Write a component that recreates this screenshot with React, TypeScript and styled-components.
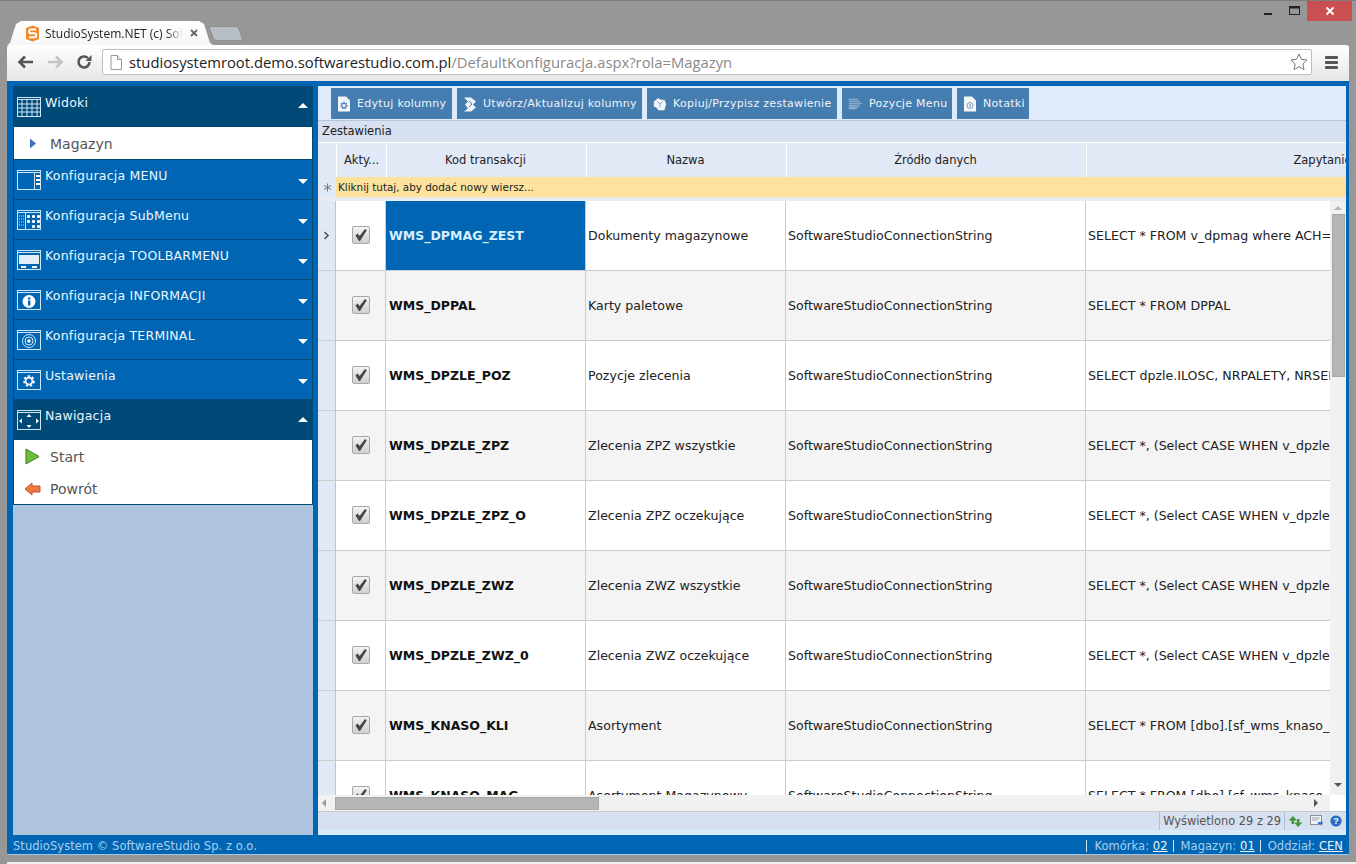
import React from 'react';
import styled, { createGlobalStyle } from 'styled-components';

const GlobalStyle = createGlobalStyle`
  html, body {
    margin: 0;
    padding: 0;
    overflow: hidden;
    background: #979797;
  }
`;

const UI_FONT = `"DejaVu Sans", Verdana, sans-serif`;
const CHROME_FONT = `"Open Sans", "Noto Sans", sans-serif`;

const Frame = styled.div`
  width: 1356px;
  height: 864px;
  display: flex;
  flex-direction: column;
  background: #979797;
  border-top: 1px solid #7c7c7c;
  box-sizing: border-box;
  overflow: hidden;
`;

const TitleBar = styled.div`
  height: 44px;
  flex: none;
  display: flex;
  align-items: flex-end;
  padding-left: 7px;
`;

const ActiveTab = styled.div`
  width: 206px;
  height: 24px;
  background: linear-gradient(#ffffff, #f6f6f6);
  clip-path: polygon(0 100%, 3px 92%, 9px 12%, 14px 0, 192px 0, 197px 12%, 203px 92%, 206px 100%);
  display: flex;
  align-items: center;
  padding: 0 14px 0 18px;
  box-sizing: border-box;
  font-family: ${CHROME_FONT};
  font-size: 12px;
  color: #222;
`;

const TabTitle = styled.span`
  width: 138px;
  margin-left: 5px;
  white-space: nowrap;
  overflow: hidden;
  -webkit-mask-image: linear-gradient(to right, #000 88%, transparent);
  mask-image: linear-gradient(to right, #000 88%, transparent);
`;

const TabClose = styled.svg`
  margin-left: 7px;
  flex: none;
`;

const NewTab = styled.div`
  width: 30px;
  height: 15px;
  margin: 0 0 4px -2px;
  background: #b8bec5;
  border: 1px solid #8a8f94;
  box-sizing: border-box;
  border-radius: 2px 3px 3px 3px;
  transform: skewX(20deg);
`;

const WindowControls = styled.div`
  margin-left: auto;
  margin-right: 4px;
  align-self: flex-start;
  display: flex;
  align-items: flex-start;
`;

const WindowButton = styled.div<{ $close?: boolean }>`
  width: ${p => (p.$close ? '45px' : '26px')};
  height: 20px;
  display: flex;
  align-items: center;
  justify-content: center;
  background: ${p => (p.$close ? '#c94f50' : 'transparent')};
`;

const Browser = styled.div`
  margin: 0 7px;
  flex: none;
  display: flex;
  flex-direction: column;
`;

const NavBar = styled.div`
  height: 36px;
  background: linear-gradient(#ffffff, #e6e6e6);
  border-radius: 3px 3px 0 0;
  display: flex;
  align-items: center;
  padding: 0 0 2px 10px;
  box-sizing: border-box;
`;

const NavIcon = styled.svg<{ $gap: number }>`
  flex: none;
  margin-right: ${p => p.$gap}px;
`;

const Omnibox = styled.div`
  width: 1210px;
  height: 26px;
  background: #fff;
  border: 1px solid #bdbdbd;
  border-radius: 2px;
  display: flex;
  align-items: center;
  padding: 0 3px 0 7px;
  box-sizing: border-box;
  font-family: ${CHROME_FONT};
  font-size: 14.8px;
  color: #222;
`;

const PageIcon = styled.svg`
  flex: none;
  margin-right: 7px;
`;

const UrlPath = styled.span`
  color: #8a8a8a;
`;

const Star = styled.svg`
  margin-left: auto;
`;

const Burger = styled.div`
  width: 13px;
  margin-left: 13px;
  display: flex;
  flex-direction: column;
  gap: 2px;

  & > i {
    display: block;
    height: 3px;
    background: #555;
    border-radius: 1px;
  }
`;

const AppShell = styled.div`
  height: 774px;
  background: #0066b3;
  display: flex;
  flex-direction: column;
  font-family: ${UI_FONT};
`;

const AppBody = styled.div`
  flex: 1;
  min-height: 0;
  display: flex;
  padding: 5px 3px 0 6px;
`;

const Sidebar = styled.aside`
  width: 300px;
  background: #aec3dd;
  flex: none;
  display: flex;
  flex-direction: column;
`;

const AccordionHead = styled.div<{ $open?: boolean; $tall?: boolean }>`
  height: ${p => (p.$tall ? '41px' : '40px')};
  background: ${p => (p.$open ? '#004a77' : '#0066b3')};
  border: 1px solid #004a77;
  border-width: ${p => (p.$open ? '0' : '0 1px 1px')};
  box-sizing: border-box;
  display: flex;
  align-items: center;
  padding: ${p => (p.$open ? '0 5px 0 4px' : '0 4px 0 3px')};
  color: #eef6fd;
  font-size: 12.5px;
  font-weight: 500;
`;

const HeadLabel = styled.span`
  margin: 0 0 9px 4px;
  letter-spacing: 0.22px;
`;

const Caret = styled.span<{ $up?: boolean }>`
  margin: ${p => (p.$up ? '0 0 2px auto' : '3px 0 0 auto')};
  width: 0;
  height: 0;
  border-left: 5px solid transparent;
  border-right: 5px solid transparent;
  ${p => (p.$up ? 'border-bottom: 5px solid #fff;' : 'border-top: 5px solid #fff;')}
`;

const AccordionBody = styled.div`
  background: #fff;
  border: 1px solid #004a77;
  border-top: 0;
  display: flex;
  flex-direction: column;
`;

const MenuItem = styled.div`
  height: 32px;
  display: flex;
  align-items: center;
  color: #555;
  font-size: 14px;
  padding-top: 1px;
  box-sizing: border-box;
`;

const MenuIconSlot = styled.span`
  width: 36px;
  flex: none;
  display: flex;
  justify-content: center;
  padding-left: 1px;
  box-sizing: border-box;
`;

const Main = styled.main`
  flex: 1;
  min-width: 0;
  margin-left: 5px;
  background: #d6e0ee;
  display: flex;
  flex-direction: column;
  overflow: hidden;
`;

const Toolbar = styled.div`
  height: 35px;
  flex: none;
  box-sizing: border-box;
  background: #dfeafa;
  border-bottom: 1px solid #b5c5d8;
  display: flex;
  gap: 5px;
  padding: 2px 0 0 13px;
`;

const ToolButton = styled.div<{ $w: number }>`
  width: ${p => p.$w}px;
  height: 31px;
  background: #457db0;
  color: #eef4fa;
  font-size: 11px;
  letter-spacing: 0.3px;
  display: flex;
  align-items: center;
  padding-left: 6px;
  box-sizing: border-box;
  white-space: nowrap;

  & > svg {
    flex: none;
    margin-right: 6px;
  }
`;

const SectionTitle = styled.div`
  height: 21px;
  flex: none;
  padding-left: 4px;
  font-size: 11.5px;
  line-height: 20px;
  color: #222;
  background: #d6e0ee;
`;

const COLUMNS = '18px 50px 200px 200px 300px 474px';

const HeaderRow = styled.div`
  height: 35px;
  flex: none;
  display: grid;
  grid-template-columns: ${COLUMNS};
  background: #e1e9f6;
  border-top: 1px solid #fff;
  box-sizing: border-box;
  color: #222;
  font-size: 11.5px;
`;

const HeaderCell = styled.div<{ $narrow?: boolean }>`
  display: flex;
  align-items: center;
  justify-content: center;
  border-left: 1px solid #fff;
  white-space: nowrap;
  overflow: hidden;
  padding: 0 ${p => (p.$narrow ? '0' : '2px')} 1px 0;
  box-sizing: border-box;
`;

const NewRow = styled.div`
  height: 20px;
  flex: none;
  display: flex;
  align-items: center;
  background: #e1e9f6;
  font-size: 10.4px;
  color: #222;
`;

const NewRowMark = styled.span`
  width: 18px;
  flex: none;
  display: flex;
  justify-content: center;
`;

const NewRowLabel = styled.span`
  flex: 1;
  height: 100%;
  background: #fde29e;
  display: flex;
  align-items: center;
  padding-left: 2px;
`;

const Spacer = styled.div`
  height: 4px;
  flex: none;
  background: #e8ebef;
`;

const GridArea = styled.div`
  flex: 1;
  min-height: 0;
  display: grid;
  grid-template-columns: 1fr 16px;
  grid-template-rows: 1fr 16px;
  background: #f1f1f1;
`;

const RowsViewport = styled.div`
  overflow: hidden;
  min-width: 0;
  min-height: 0;
  background: #fff;
`;

const DataRow = styled.div<{ $alt: boolean }>`
  height: 70px;
  display: grid;
  grid-template-columns: ${COLUMNS};
  background: ${p => (p.$alt ? '#f4f4f4' : '#fff')};
  border-bottom: 1px solid #ccc;
  box-sizing: border-box;
  font-size: 12.6px;
  color: #222;
`;

const Indicator = styled.div`
  background: #e1e9f6;
  border-right: 1px solid #b4c6dc;
  display: flex;
  align-items: center;
  justify-content: center;
  box-sizing: border-box;
`;

const CheckCell = styled.div`
  display: flex;
  align-items: center;
  justify-content: center;
  border-right: 1px solid #ccc;
  box-sizing: border-box;
  padding-bottom: 2px;
`;

const CheckBox = styled.span`
  width: 18px;
  height: 18px;
  box-sizing: border-box;
  border: 1px solid #a8a8a8;
  border-radius: 2px;
  background: linear-gradient(#f2f2f2, #cfcfcf);
  display: flex;
  align-items: center;
  justify-content: center;
`;

const Cell = styled.div<{ $code?: boolean; $selected?: boolean }>`
  display: flex;
  align-items: center;
  padding-left: 2px;
  border-right: 1px solid #ccc;
  box-sizing: border-box;
  white-space: nowrap;
  overflow: hidden;
  font-weight: ${p => (p.$code ? 700 : 400)};
  ${p => p.$code && 'font-size: 12.5px; color: #111; padding-left: 3px;'}
  ${p => p.$selected && 'background: #0066b3; color: #d8effd;'}
`;

const VScroll = styled.div`
  display: flex;
  flex-direction: column;
  align-items: center;
  background: #f1f1f1;
`;

const VSpace = styled.div`
  flex: 1;
`;

const VThumb = styled.div`
  width: 13px;
  height: 163px;
  background: #b5b5b5;
  border: 1px solid #a8a8a8;
  box-sizing: border-box;
  margin-top: 4px;
`;

const HScroll = styled.div`
  display: flex;
  align-items: center;
  background: #f1f1f1;
  padding-left: 4px;
`;

const HThumb = styled.div`
  width: 264px;
  height: 13px;
  margin-left: 9px;
  background: #b5b5b5;
  border: 1px solid #a8a8a8;
  box-sizing: border-box;
`;

const ArrowH = styled.span<{ $right?: boolean }>`
  width: 0;
  height: 0;
  border-top: 4px solid transparent;
  border-bottom: 4px solid transparent;
  ${p => (p.$right ? 'border-left: 4px solid #555; margin-left: auto; margin-right: 12px;' : 'border-right: 4px solid #999;')}
`;

const ArrowV = styled.span<{ $down?: boolean }>`
  width: 0;
  height: 0;
  border-left: 4px solid transparent;
  border-right: 4px solid transparent;
  ${p => (p.$down ? 'border-top: 4px solid #555; margin: 0 0 8px;' : 'border-bottom: 4px solid #b5b5b5; margin-top: 5px;')}
`;

const ScrollCorner = styled.div`
  background: #fff;
`;

const StatusBar = styled.div`
  height: 24px;
  flex: none;
  background: #d6e0ee;
  border-top: 1px solid #c3cad3;
  border-bottom: 5px solid #d9ebfb;
  box-sizing: border-box;
  display: flex;
  justify-content: flex-end;
  align-items: stretch;
  padding-right: 4px;
  font-size: 11.4px;
  color: #555;
`;

const StatusCount = styled.span`
  display: flex;
  align-items: center;
  padding: 0 3px;
  border-left: 1px solid #aebccc;
  border-right: 1px solid #aebccc;
  white-space: nowrap;
`;

const StatusIcons = styled.span`
  display: flex;
  align-items: center;
  gap: 7px;
  padding-left: 3px;
`;

const Footer = styled.footer`
  height: 20px;
  flex: none;
  display: flex;
  align-items: center;
  justify-content: space-between;
  padding: 0 6px 0 6px;
  font-size: 11.5px;
  letter-spacing: 0.05px;
  color: #a9cff0;
  border-top: 1px solid #0066b3;
  box-sizing: border-box;
  box-shadow: inset 0 -1px 0 #9ec6e8;
`;

const FooterGroup = styled.span`
  display: flex;
  gap: 5px;
`;

const FooterPart = styled.span`
  border-left: 1px solid #d5e7f6;
  padding-left: 7px;
  line-height: 12px;

  & > u {
    color: #eef6fd;
  }
`;

const BottomStrip = styled.div`
  flex: 1;
  margin: 7px 0 0 7px;
  background: #f0f0f0;
`;

/* drawings */

const WinSvg = styled.svg`
  flex: none;
`;

const WinIcon = ({ children }: { children?: React.ReactNode }) => (
  <WinSvg width="24" height="20" viewBox="0 0 24 20" fill="none" stroke="#cfe6f7" strokeWidth="1">
    <rect x="0.5" y="0.5" width="23" height="19" />
    <line x1="0.5" y1="2.5" x2="23.5" y2="2.5" />
    {children}
  </WinSvg>
);

const Gear = ({ cx, cy, r, color }: { cx: number; cy: number; r: number; color: string }) => (
  <g stroke={color} fill="none">
    <circle cx={cx} cy={cy} r={r} strokeWidth={r * 0.5} />
    <circle cx={cx} cy={cy} r={r * 1.45} strokeWidth={r * 0.5} strokeDasharray={`${r * 0.7} ${r * 0.55}`} />
  </g>
);

const sideIcons: Record<string, React.ReactNode> = {
  grid: (
    <>
      <line x1="0.5" y1="7" x2="23.5" y2="7" />
      <line x1="0.5" y1="11" x2="23.5" y2="11" />
      <line x1="0.5" y1="15" x2="23.5" y2="15" />
      <line x1="5" y1="3" x2="5" y2="19" />
      <line x1="10" y1="3" x2="10" y2="19" />
      <line x1="15" y1="3" x2="15" y2="19" />
      <line x1="20" y1="3" x2="20" y2="19" />
    </>
  ),
  menu: (
    <>
      <line x1="17.5" y1="3" x2="17.5" y2="19" />
      <rect x="19" y="5" width="4" height="2" fill="#fff" stroke="none" />
      <rect x="19" y="9" width="4" height="2" fill="#fff" stroke="none" />
      <rect x="19" y="13" width="4" height="2" fill="#fff" stroke="none" />
    </>
  ),
  sub: (
    <>
      <line x1="8.5" y1="3" x2="8.5" y2="19" />
      <path d="M2 6h5M2 9h5M2 12h5M2 15h5" strokeDasharray="1 1" />
      <g fill="#fff" stroke="none">
        <rect x="10" y="5" width="3" height="3" rx="1" />
        <rect x="15" y="5" width="3" height="3" rx="1" />
        <rect x="20" y="5" width="3" height="3" rx="1" />
        <rect x="10" y="10" width="3" height="3" rx="1" />
        <rect x="15" y="10" width="3" height="3" rx="1" />
        <rect x="20" y="10" width="3" height="3" rx="1" />
        <rect x="15" y="15" width="3" height="3" rx="1" />
        <rect x="20" y="15" width="3" height="3" rx="1" />
      </g>
    </>
  ),
  toolbar: (
    <>
      <rect x="2" y="5" width="20" height="9" fill="#e3eef7" stroke="none" />
      <rect x="4" y="16" width="5" height="2" fill="#fff" stroke="none" />
      <rect x="15" y="16" width="5" height="2" fill="#fff" stroke="none" />
    </>
  ),
  info: (
    <>
      <circle cx="12" cy="11.5" r="6.5" fill="#fff" stroke="none" />
      <rect x="11" y="10.5" width="2.4" height="5" fill="#0066b3" stroke="none" />
      <rect x="11" y="7.5" width="2.4" height="2" fill="#0066b3" stroke="none" />
    </>
  ),
  target: (
    <>
      <circle cx="12" cy="11" r="6.5" />
      <circle cx="12" cy="11" r="4" />
      <circle cx="12" cy="11" r="1.8" fill="#fff" stroke="none" />
    </>
  ),
  gear: <Gear cx={12} cy={11} r={3.4} color="#fff" />,
  nav: (
    <g fill="#fff" stroke="none">
      <path d="M12 4l2.5 3h-5z" />
      <path d="M12 18l-2.5-3h5z" />
      <path d="M2 11l3-2.5v5z" />
      <path d="M22 11l-3-2.5v5z" />
    </g>
  ),
};

const DocIcon = ({ children }: { children?: React.ReactNode }) => (
  <svg width="14" height="16" viewBox="0 0 14 16">
    <path d="M1 0.5h8l4 4v11H1z" fill="#f4f7fa" />
    {children}
  </svg>
);

const toolButtons = [
  {
    label: 'Edytuj kolumny',
    w: 121,
    icon: (
      <DocIcon>
        <Gear cx={7} cy={9.5} r={2.2} color="#4a7fc0" />
      </DocIcon>
    ),
  },
  {
    label: 'Utwórz/Aktualizuj kolumny',
    w: 185,
    icon: (
      <svg width="14" height="16" viewBox="0 0 14 16">
        <path d="M1 1.5h7l5 4-3 3 3 3-5 4H1l4-3-3-4 3-3z" fill="#f1f5f9" />
        <path d="M6 5l3 3-3 3" stroke="#457db0" fill="none" />
      </svg>
    ),
  },
  {
    label: 'Kopiuj/Przypisz zestawienie',
    w: 190,
    icon: (
      <svg width="14" height="16" viewBox="0 0 16 16">
        <path d="M1 5l5-4 3 2 4 0 2 5-2 7H6l-2-3-3-1z" fill="#f1f5f9" />
        <path d="M5 5l3 3 3-3M8 8v4" stroke="#7a9cbd" fill="none" />
      </svg>
    ),
  },
  {
    label: 'Pozycje Menu',
    w: 110,
    icon: (
      <svg width="15" height="14" viewBox="0 0 19 14">
        <path d="M1 1h12M1 3.5h14M1 6h17M1 8.5h14M1 11h12M1 13h10" stroke="#9db9d6" strokeWidth="1.4" />
      </svg>
    ),
  },
  {
    label: 'Notatki',
    w: 72,
    icon: (
      <DocIcon>
        <circle cx="7" cy="9.5" r="3" fill="none" stroke="#7a9cbd" />
        <rect x="6.4" y="8" width="1.3" height="3.2" fill="#7a9cbd" />
      </DocIcon>
    ),
  },
];

const sections = [
  { label: 'Konfiguracja MENU', icon: 'menu' },
  { label: 'Konfiguracja SubMenu', icon: 'sub' },
  { label: 'Konfiguracja TOOLBARMENU', icon: 'toolbar' },
  { label: 'Konfiguracja INFORMACJI', icon: 'info' },
  { label: 'Konfiguracja TERMINAL', icon: 'target' },
  { label: 'Ustawienia', icon: 'gear' },
];

const CONN = 'SoftwareStudioConnectionString';
const rows = [
  ['WMS_DPMAG_ZEST', 'Dokumenty magazynowe', 'SELECT * FROM v_dpmag where ACH=\'T\' AND TYP=1'],
  ['WMS_DPPAL', 'Karty paletowe', 'SELECT * FROM DPPAL'],
  ['WMS_DPZLE_POZ', 'Pozycje zlecenia', 'SELECT dpzle.ILOSC, NRPALETY, NRSERII, KOD FROM dpzle'],
  ['WMS_DPZLE_ZPZ', 'Zlecenia ZPZ wszystkie', 'SELECT *, (Select CASE WHEN v_dpzle.STATUS=1 THEN 1 END)'],
  ['WMS_DPZLE_ZPZ_O', 'Zlecenia ZPZ oczekujące', 'SELECT *, (Select CASE WHEN v_dpzle.STATUS=1 THEN 1 END)'],
  ['WMS_DPZLE_ZWZ', 'Zlecenia ZWZ wszystkie', 'SELECT *, (Select CASE WHEN v_dpzle.STATUS=1 THEN 1 END)'],
  ['WMS_DPZLE_ZWZ_0', 'Zlecenia ZWZ oczekujące', 'SELECT *, (Select CASE WHEN v_dpzle.STATUS=1 THEN 1 END)'],
  ['WMS_KNASO_KLI', 'Asortyment', 'SELECT * FROM [dbo].[sf_wms_knaso_kli]()'],
  ['WMS_KNASO_MAG', 'Asortyment Magazynowy', 'SELECT * FROM [dbo].[sf_wms_knaso_mag]()'],
];

const App: React.FC = () => {
  return (
    <>
      <GlobalStyle />
      <Frame>
        <TitleBar>
          <ActiveTab>
            <svg width="15" height="17" viewBox="0 0 15 17">
              <path d="M7.5 0.5l6.5 2.5v11l-6.5 2.5L1 14V3z" fill="#f08a2c" />
              <path d="M11 4.5H6a1.8 1.8 0 0 0 0 3.8h3.4a1.8 1.8 0 0 1 0 3.9H4" fill="none" stroke="#fff" strokeWidth="2" />
            </svg>
            <TabTitle>StudioSystem.NET (c) SoftwareStudio</TabTitle>
            <TabClose width="8" height="8" viewBox="0 0 8 8">
              <path d="M1 1l6 6M7 1L1 7" stroke="#666" strokeWidth="1.8" />
            </TabClose>
          </ActiveTab>
          <NewTab />
          <WindowControls>
            <WindowButton>
              <svg width="10" height="10" viewBox="0 0 10 10">
                <rect x="1" y="7" width="8" height="2" fill="#222" />
              </svg>
            </WindowButton>
            <WindowButton>
              <svg width="11" height="10" viewBox="0 0 11 10">
                <rect x="0.5" y="0.5" width="10" height="8" fill="none" stroke="#222" />
                <rect x="0.5" y="0.5" width="10" height="2" fill="#222" />
              </svg>
            </WindowButton>
            <WindowButton $close>
              <svg width="10" height="10" viewBox="0 0 10 10">
                <path d="M1.5 1.5l7 7M8.5 1.5l-7 7" stroke="#fff" strokeWidth="2" />
              </svg>
            </WindowButton>
          </WindowControls>
        </TitleBar>
        <Browser>
          <NavBar>
            <NavIcon $gap={13} width="17" height="14" viewBox="0 0 17 14">
              <path d="M16 7H3M8 1.5L2.5 7 8 12.5" fill="none" stroke="#555" strokeWidth="2.6" />
            </NavIcon>
            <NavIcon $gap={12} width="17" height="14" viewBox="0 0 17 14">
              <path d="M1 7h13M9 1.5L14.5 7 9 12.5" fill="none" stroke="#c4c4c4" strokeWidth="2.6" />
            </NavIcon>
            <NavIcon $gap={10} width="16" height="16" viewBox="0 0 16 16">
              <path d="M13.5 8a5.5 5.5 0 1 1-1.6-3.9" fill="none" stroke="#555" strokeWidth="2.6" />
              <path d="M15.5 1v6h-6z" fill="#555" />
            </NavIcon>
            <Omnibox>
              <PageIcon width="12" height="15" viewBox="0 0 12 15">
                <path d="M1 0.5h6.5l4 4v10H1z" fill="#fff" stroke="#999" />
                <path d="M7.5 0.5v4h4" fill="#eee" stroke="#999" />
              </PageIcon>
              <span>studiosystemroot.demo.softwarestudio.com.pl</span>
              <UrlPath>/DefaultKonfiguracja.aspx?rola=Magazyn</UrlPath>
              <Star width="18" height="18" viewBox="0 0 18 18">
                <path d="M9 1l2.4 5.3 5.6.7-4.1 3.9 1.1 5.7L9 13.8 4 16.6l1.1-5.7L1 7l5.6-.7z" fill="#fff" stroke="#777" />
              </Star>
            </Omnibox>
            <Burger>
              <i />
              <i />
              <i />
            </Burger>
          </NavBar>
          <AppShell>
            <AppBody>
              <Sidebar>
                <AccordionHead $open $tall>
                  <WinIcon>{sideIcons.grid}</WinIcon>
                  <HeadLabel>Widoki</HeadLabel>
                  <Caret $up />
                </AccordionHead>
                <AccordionBody>
                  <MenuItem>
                    <MenuIconSlot>
                      <svg width="8" height="11" viewBox="0 0 8 11">
                        <path d="M1 0.5l6 5-6 5z" fill="#3f6fc4" />
                      </svg>
                    </MenuIconSlot>
                    Magazyn
                  </MenuItem>
                </AccordionBody>
                {sections.map(s => (
                  <AccordionHead key={s.label}>
                    <WinIcon>{sideIcons[s.icon]}</WinIcon>
                    <HeadLabel>{s.label}</HeadLabel>
                    <Caret />
                  </AccordionHead>
                ))}
                <AccordionHead $open>
                  <WinIcon>{sideIcons.nav}</WinIcon>
                  <HeadLabel>Nawigacja</HeadLabel>
                  <Caret $up />
                </AccordionHead>
                <AccordionBody>
                  <MenuItem>
                    <MenuIconSlot>
                      <svg width="15" height="17" viewBox="0 0 15 17">
                        <path d="M1 1l13 7.5L1 16z" fill="#6fbe3c" stroke="#3d7d24" />
                      </svg>
                    </MenuIconSlot>
                    Start
                  </MenuItem>
                  <MenuItem>
                    <MenuIconSlot>
                      <svg width="17" height="14" viewBox="0 0 17 14">
                        <path d="M1 7l7-6v3h8v6H8v3z" fill="#ea7a42" stroke="#c5532a" />
                      </svg>
                    </MenuIconSlot>
                    Powrót
                  </MenuItem>
                </AccordionBody>
              </Sidebar>
              <Main>
                <Toolbar>
                  {toolButtons.map(b => (
                    <ToolButton key={b.label} $w={b.w}>
                      {b.icon}
                      {b.label}
                    </ToolButton>
                  ))}
                </Toolbar>
                <SectionTitle>Zestawienia</SectionTitle>
                <HeaderRow>
                  <div />
                  <HeaderCell $narrow>Akty...</HeaderCell>
                  <HeaderCell>Kod transakcji</HeaderCell>
                  <HeaderCell>Nazwa</HeaderCell>
                  <HeaderCell>Źródło danych</HeaderCell>
                  <HeaderCell>Zapytanie</HeaderCell>
                </HeaderRow>
                <NewRow>
                  <NewRowMark>
                    <svg width="9" height="9" viewBox="0 0 9 9">
                      <path d="M4.5 0.5v8M1 2.5l7 4M8 2.5l-7 4" stroke="#777" strokeWidth="1" />
                    </svg>
                  </NewRowMark>
                  <NewRowLabel>Kliknij tutaj, aby dodać nowy wiersz...</NewRowLabel>
                </NewRow>
                <Spacer />
                <GridArea>
                  <RowsViewport>
                    {rows.map((r, i) => (
                      <DataRow key={r[0]} $alt={i % 2 === 1}>
                        <Indicator>
                          {i === 0 && (
                            <svg width="7" height="9" viewBox="0 0 7 9">
                              <path d="M1.5 1l3.5 3.5L1.5 8" fill="none" stroke="#555" strokeWidth="1.6" />
                            </svg>
                          )}
                        </Indicator>
                        <CheckCell>
                          <CheckBox>
                            <svg width="14" height="14" viewBox="0 0 14 14">
                              <path d="M1.5 7.5l2-2 2.2 2.4L11 1l1.8 1.2L6 13h-1z" fill="#444" />
                            </svg>
                          </CheckBox>
                        </CheckCell>
                        <Cell $code $selected={i === 0}>{r[0]}</Cell>
                        <Cell>{r[1]}</Cell>
                        <Cell>{CONN}</Cell>
                        <Cell>{r[2]}</Cell>
                      </DataRow>
                    ))}
                  </RowsViewport>
                  <VScroll>
                    <ArrowV />
                    <VThumb />
                    <VSpace />
                    <ArrowV $down />
                  </VScroll>
                  <HScroll>
                    <ArrowH />
                    <HThumb />
                    <ArrowH $right />
                  </HScroll>
                  <ScrollCorner />
                </GridArea>
                <StatusBar>
                  <StatusCount>Wyświetlono 29 z 29</StatusCount>
                  <StatusIcons>
                    <svg width="15" height="13" viewBox="0 0 15 13">
                      <path d="M5 1L0.5 5.5h3V9h2.5V5.5h3z" fill="#3f9a36" />
                      <path d="M10 12l4.500-4.500h-3V4H9v3.500H6z" fill="#3f9a36" />
                    </svg>
                    <svg width="13" height="13" viewBox="0 0 13 13">
                      <rect x="0.5" y="0.5" width="11" height="9" fill="#eef1f5" stroke="#8c8f94" />
                      <path d="M2 3h8M2 5h6" stroke="#9aa" />
                      <path d="M8 7h3V5l2 3-2 3V9H8z" fill="#3f6fc4" />
                    </svg>
                    <svg width="12" height="12" viewBox="0 0 12 12">
                      <circle cx="6" cy="6" r="5.6" fill="#2a6cc4" />
                      <text x="6" y="9.3" textAnchor="middle" fontSize="9" fontWeight="700" fill="#fff" fontFamily="Liberation Sans, sans-serif">?</text>
                    </svg>
                  </StatusIcons>
                </StatusBar>
              </Main>
            </AppBody>
            <Footer>
              <span>StudioSystem © SoftwareStudio Sp. z o.o.</span>
              <FooterGroup>
                <FooterPart>Komórka: <u>02</u></FooterPart>
                <FooterPart>Magazyn: <u>01</u></FooterPart>
                <FooterPart>Oddział: <u>CEN</u></FooterPart>
              </FooterGroup>
            </Footer>
          </AppShell>
        </Browser>
        <BottomStrip />
      </Frame>
    </>
  );
};

export default App;
